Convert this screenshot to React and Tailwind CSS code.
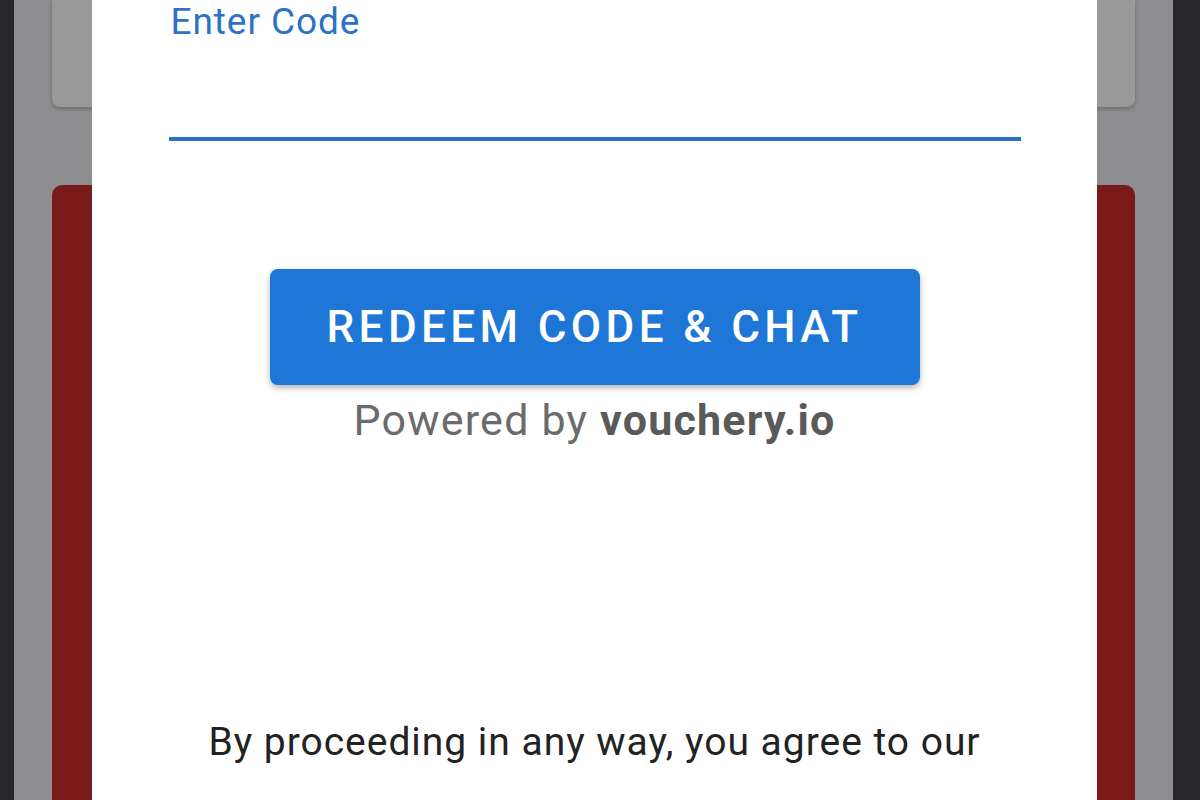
import React from 'react';

function App() {
  return (
    <div className="relative w-[1200px] h-[800px] overflow-hidden bg-[#28272b] flex" style={{ fontFamily: 'Roboto, "Noto Sans", sans-serif' }}>
      <div className="w-[14px] shrink-0" />
      <div className="flex-1 bg-[#8e8e90] px-[38px] flex flex-col">
        <div className="h-[107px] bg-[#99999a] rounded-b-[8px] shadow-[0_2px_4px_rgba(0,0,0,0.25)]" />
        <div className="mt-[78px] flex-1 bg-[#7a1a1a] rounded-t-[10px]" />
      </div>
      <div className="w-[27px] shrink-0" />

      {/* modal sheet */}
      <div className="absolute left-[92px] top-0 w-[1005px] h-full bg-white flex flex-col items-center">
        <div className="w-[852px] pt-[3px]">
          <div className="text-[37px] leading-none tracking-[0.025em] text-[#2c72c6] pl-[2px]">Enter Code</div>
          <div className="mt-[97px] h-[4px] bg-[#2a71c6]" />
        </div>
        <button className="mt-[128px] w-[650px] h-[116px] rounded-[8px] bg-[#1e76d6] text-white text-[44px] font-medium tracking-[0.1em] leading-none flex items-center justify-center shadow-[0_3px_6px_rgba(0,0,0,0.3)]">
          REDEEM CODE &amp; CHAT
        </button>
        <div className="mt-[14px] text-[43px] leading-none tracking-[0.028em] text-[#6b6b6b]">
          Powered by <span className="font-bold text-[#5a5a5a]">vouchery.io</span>
        </div>
        <div className="mt-[281px] text-[39px] leading-none tracking-[0.025em] text-[#222222]">
          By proceeding in any way, you agree to our
        </div>
      </div>
    </div>
  );
}

export default App;
